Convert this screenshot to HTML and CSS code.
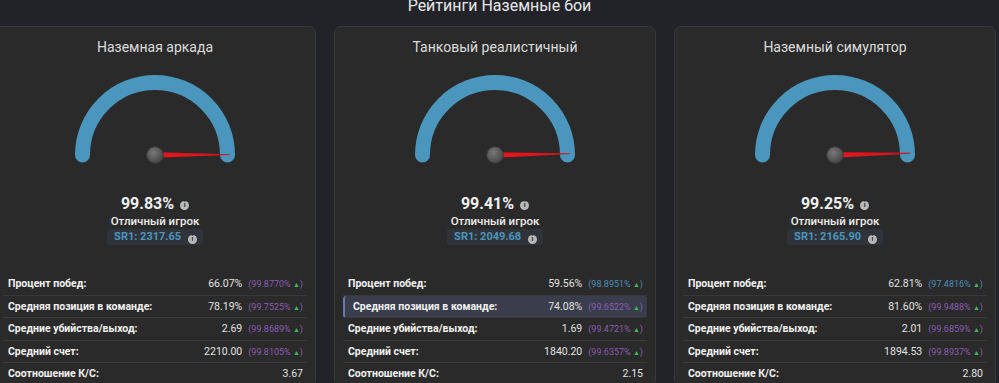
FILE: index.html
```html
<!DOCTYPE html>
<html lang="ru">
<head>
  <meta charset="UTF-8">
  <title>Рейтинги Наземные бои</title>
  <link rel="stylesheet" href="styles.css">
</head>
<body>

  <!-- shared gradients for the gauges -->
  <svg class="defs" width="0" height="0">
    <defs>
      <radialGradient id="pivotGrad" cx="40%" cy="35%" r="70%">
        <stop offset="0" stop-color="#777"/>
        <stop offset="1" stop-color="#444"/>
      </radialGradient>
      <linearGradient id="needleGrad" x1="0" y1="0" x2="1" y2="0">
        <stop offset="0" stop-color="#e8141c"/>
        <stop offset="1" stop-color="#d0151c"/>
      </linearGradient>
    </defs>
  </svg>

  <h2 class="page-title">Рейтинги Наземные бои</h2>

  <div class="cards">

    <!-- Arcade -->
    <div class="card">
      <div class="card-title">Наземная аркада</div>
      <svg class="gauge" viewBox="0 0 170 90" width="170" height="90">
        <path d="M12.5 80 A72.5 72.5 0 0 1 157.5 80" class="gauge-arc"/>
        <g transform="rotate(-0.3 85 80)">
          <polygon points="85,77.2 160,79.6 160,80.4 85,82.8" class="needle"/>
        </g>
        <circle cx="85" cy="80" r="8.3" class="pivot"/>
      </svg>
      <div class="score">99.83% <span class="info">i</span></div>
      <div class="rank">Отличный игрок</div>
      <div class="sr">SR1: 2317.65 <span class="info">i</span></div>
      <ul class="stats">
        <li><b>Процент побед:</b><span class="val">66.07%<small class="pct top">(99.8770% <i>▲</i>)</small></span></li>
        <li><b>Средняя позиция в команде:</b><span class="val">78.19%<small class="pct top">(99.7525% <i>▲</i>)</small></span></li>
        <li><b>Средние убийства/выход:</b><span class="val">2.69<small class="pct top">(99.8689% <i>▲</i>)</small></span></li>
        <li><b>Средний счет:</b><span class="val">2210.00<small class="pct top">(99.8105% <i>▲</i>)</small></span></li>
        <li><b>Соотношение К/С:</b><span class="val">3.67</span></li>
      </ul>
    </div>

    <!-- Realistic -->
    <div class="card">
      <div class="card-title">Танковый реалистичный</div>
      <svg class="gauge" viewBox="0 0 170 90" width="170" height="90">
        <path d="M12.5 80 A72.5 72.5 0 0 1 157.5 80" class="gauge-arc"/>
        <g transform="rotate(-1.06 85 80)">
          <polygon points="85,77.2 160,79.6 160,80.4 85,82.8" class="needle"/>
        </g>
        <circle cx="85" cy="80" r="8.3" class="pivot"/>
      </svg>
      <div class="score">99.41% <span class="info">i</span></div>
      <div class="rank">Отличный игрок</div>
      <div class="sr">SR1: 2049.68 <span class="info">i</span></div>
      <ul class="stats">
        <li><b>Процент побед:</b><span class="val">59.56%<small class="pct">(98.8951% <i>▲</i>)</small></span></li>
        <li class="active"><b>Средняя позиция в команде:</b><span class="val">74.08%<small class="pct top">(99.6522% <i>▲</i>)</small></span></li>
        <li><b>Средние убийства/выход:</b><span class="val">1.69<small class="pct top">(99.4721% <i>▲</i>)</small></span></li>
        <li><b>Средний счет:</b><span class="val">1840.20<small class="pct top">(99.6357% <i>▲</i>)</small></span></li>
        <li><b>Соотношение К/С:</b><span class="val">2.15</span></li>
      </ul>
    </div>

    <!-- Simulator -->
    <div class="card">
      <div class="card-title">Наземный симулятор</div>
      <svg class="gauge" viewBox="0 0 170 90" width="170" height="90">
        <path d="M12.5 80 A72.5 72.5 0 0 1 157.5 80" class="gauge-arc"/>
        <g transform="rotate(-1.35 85 80)">
          <polygon points="85,77.2 160,79.6 160,80.4 85,82.8" class="needle"/>
        </g>
        <circle cx="85" cy="80" r="8.3" class="pivot"/>
      </svg>
      <div class="score">99.25% <span class="info">i</span></div>
      <div class="rank">Отличный игрок</div>
      <div class="sr">SR1: 2165.90 <span class="info">i</span></div>
      <ul class="stats">
        <li><b>Процент побед:</b><span class="val">62.81%<small class="pct">(97.4816% <i>▲</i>)</small></span></li>
        <li><b>Средняя позиция в команде:</b><span class="val">81.60%<small class="pct top">(99.9488% <i>▲</i>)</small></span></li>
        <li><b>Средние убийства/выход:</b><span class="val">2.01<small class="pct top">(99.6859% <i>▲</i>)</small></span></li>
        <li><b>Средний счет:</b><span class="val">1894.53<small class="pct top">(99.8937% <i>▲</i>)</small></span></li>
        <li><b>Соотношение К/С:</b><span class="val">2.80</span></li>
      </ul>
    </div>

  </div>

</body>
</html>
```

FILE: styles.css
```css
body {
  margin: 0;
  background-color: #212328;
  font-family: Roboto, "Noto Sans", sans-serif;
  color: #e6e6e6;
  overflow: hidden;
}
.defs {
  position: absolute;
}
.page-title {
  margin: -4px 0 0;
  height: 29px;
  line-height: 20px;
  font-size: 16px;
  font-weight: 400;
  text-align: center;
  color: #e8e8e8;
}
.cards {
  display: flex;
  gap: 18px;
  margin: 1px 0 0 -6px;
}
.card {
  flex: 0 0 322px;
  box-sizing: border-box;
  background-color: #2a2a2a;
  border: 1px solid #35373b;
  border-radius: 7px;
  padding: 10px 8px 0;
  display: flex;
  flex-direction: column;
  align-items: center;
}
.card-title {
  font-size: 14px;
  line-height: 20px;
  color: #dcdcdc;
}
.gauge {
  display: block;
  margin-top: 18px;
}
.gauge-arc {
  fill: none;
  stroke: #4a96bd;
  stroke-width: 15;
  stroke-linecap: round;
}
.needle {
  fill: url(#needleGrad);
}
.pivot {
  fill: url(#pivotGrad);
  stroke: #3c3c3c;
  stroke-width: 1;
}
.score {
  margin-top: 29px;
  font-size: 16px;
  line-height: 20px;
  font-weight: 700;
  color: #f0f0f0;
}
.info {
  display: inline-block;
  width: 9px;
  height: 9px;
  border-radius: 50%;
  background-color: #b9b9b9;
  color: #2a2a2a;
  font-size: 7px;
  font-weight: 700;
  font-style: normal;
  line-height: 9px;
  text-align: center;
  vertical-align: 2px;
  margin-left: 2px;
}
.rank {
  font-size: 11.5px;
  line-height: 14px;
  font-weight: 500;
  color: #ececec;
}
.sr {
  margin-top: 1px;
  padding: 0 6px 0 7px;
  height: 16px;
  line-height: 16px;
  border-radius: 3px;
  background-color: #30343a;
  color: #4a96bd;
  font-size: 11px;
  font-weight: 700;
}
.sr .info {
  vertical-align: -1px;
  margin-left: 4px;
}
.stats {
  list-style: none;
  margin: 28px 0 0;
  padding: 0;
  align-self: stretch;
}
.stats li {
  display: flex;
  justify-content: space-between;
  align-items: center;
  box-sizing: border-box;
  height: 22.5px;
  padding: 0 4px 0 5px;
  font-size: 10.5px;
  border-bottom: 1px solid #38383a;
}
.stats li b {
  font-weight: 700;
  color: #f2f2f2;
}
.stats li.active {
  background-color: #3a3d4c;
  border-left: 2px solid #6b79a6;
  border-radius: 3px;
  padding-left: 8px;
}
.val {
  font-size: 10.5px;
  color: #e2e2e2;
}
.pct {
  margin-left: 6px;
  font-size: 9px;
  color: #4a8dba;
}
.pct.top {
  color: #8a5cb0;
}
.pct i {
  font-style: normal;
  color: #3dbb55;
  font-size: 7px;
}
```
